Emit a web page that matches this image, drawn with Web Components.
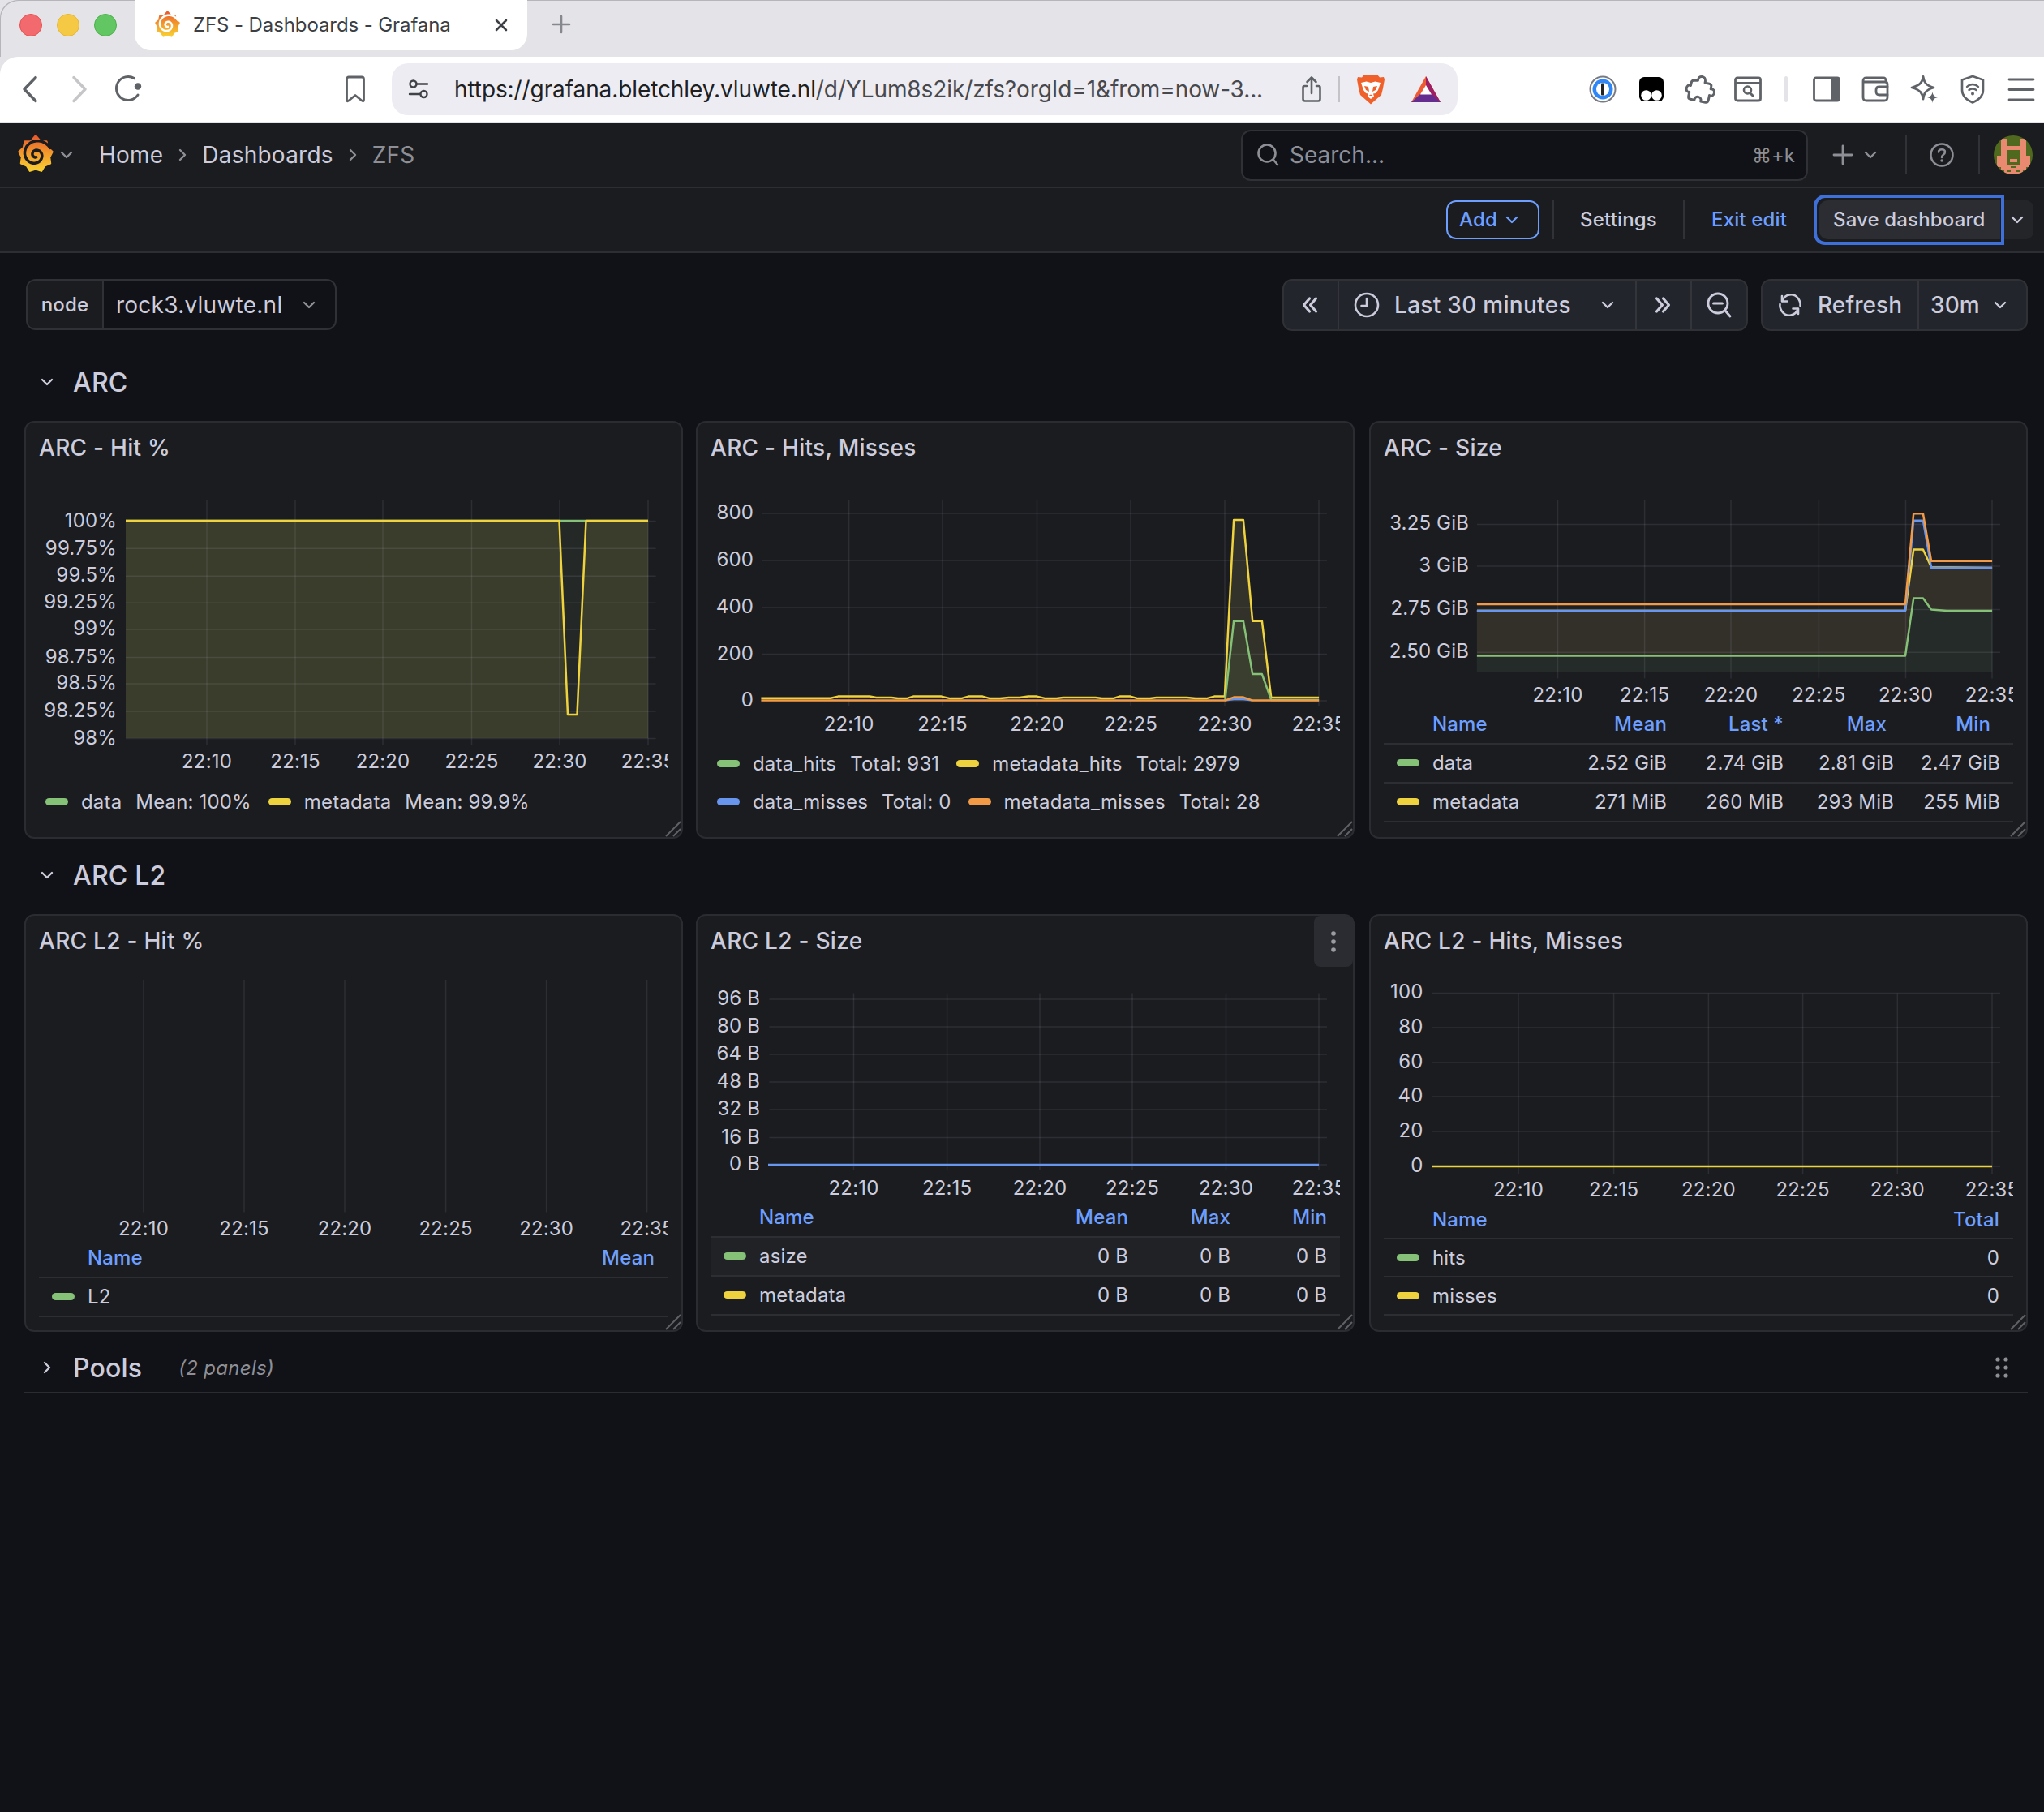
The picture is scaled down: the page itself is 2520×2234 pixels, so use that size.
<!DOCTYPE html>
<html lang="en"><head><meta charset="utf-8"><title>ZFS - Dashboards - Grafana</title>
<style>
html,body{margin:0;padding:0;background:#111217;}
body{width:2520px;height:2234px;overflow:hidden;font-family:Inter,"Noto Sans","DejaVu Sans",sans-serif;color:#ccccdc;}
</style></head>
<body>
<browser-chrome></browser-chrome>
<gf-topnav></gf-topnav>
<gf-toolbar></gf-toolbar>
<gf-main>
  <gf-controls></gf-controls>
  <gf-rowhead label="ARC"></gf-rowhead>
  <gf-grid>
    <gf-panel label="ARC - Hit %">
      <ts-chart cfg="hit"></ts-chart>
      <lg-list>
        <lg-item color="#85c176" name="data" value="Mean: 100%"></lg-item>
        <lg-item color="#eed33f" name="metadata" value="Mean: 99.9%"></lg-item>
      </lg-list>
    </gf-panel>
    <gf-panel label="ARC - Hits, Misses">
      <ts-chart cfg="hits"></ts-chart>
      <lg-list wrap>
        <lg-item color="#85c176" name="data_hits" value="Total: 931"></lg-item>
        <lg-item color="#eed33f" name="metadata_hits" value="Total: 2979"></lg-item>
        <lg-item color="#6895ed" name="data_misses" value="Total: 0"></lg-item>
        <lg-item color="#f29a45" name="metadata_misses" value="Total: 28"></lg-item>
      </lg-list>
    </gf-panel>
    <gf-panel label="ARC - Size">
      <ts-chart cfg="size"></ts-chart>
      <lg-table style="--cols:136px 153px 144px 136px 131px">
        <lg-row head><span>Name</span><span>Mean</span><span>Last *</span><span style="padding-right:9px">Max</span><span style="padding-right:12px">Min</span></lg-row>
        <lg-row color="#85c176"><span>data</span><span>2.52 GiB</span><span>2.74 GiB</span><span>2.81 GiB</span><span>2.47 GiB</span></lg-row>
        <lg-row color="#eed33f"><span>metadata</span><span>271 MiB</span><span>260 MiB</span><span>293 MiB</span><span>255 MiB</span></lg-row>
      </lg-table>
    </gf-panel>
  </gf-grid>
  <gf-rowhead label="ARC L2" style="margin-top:14px"></gf-rowhead>
  <gf-grid>
    <gf-panel label="ARC L2 - Hit %">
      <ts-chart cfg="l2hit"></ts-chart>
      <lg-table style="--cols:1fr 120px">
        <lg-row head><span>Name</span><span>Mean</span></lg-row>
        <lg-row color="#85c176"><span>L2</span><span></span></lg-row>
      </lg-table>
    </gf-panel>
    <gf-panel label="ARC L2 - Size" menu>
      <ts-chart cfg="l2size"></ts-chart>
      <lg-table style="--cols:1fr 120px 126px 119px;--pr:16px">
        <lg-row head><span>Name</span><span>Mean</span><span>Max</span><span>Min</span></lg-row>
        <lg-row color="#85c176" hover><span>asize</span><span>0 B</span><span>0 B</span><span>0 B</span></lg-row>
        <lg-row color="#eed33f"><span>metadata</span><span>0 B</span><span>0 B</span><span>0 B</span></lg-row>
      </lg-table>
    </gf-panel>
    <gf-panel label="ARC L2 - Hits, Misses">
      <ts-chart cfg="l2hits"></ts-chart>
      <lg-table style="--cols:1fr 120px;--rh:47px">
        <lg-row head style="--rh:48px"><span>Name</span><span>Total</span></lg-row>
        <lg-row color="#85c176"><span>hits</span><span>0</span></lg-row>
        <lg-row color="#eed33f"><span>misses</span><span>0</span></lg-row>
      </lg-table>
    </gf-panel>
  </gf-grid>
  <gf-rowhead label="Pools" style="margin-top:14px" collapsed note="(2 panels)"></gf-rowhead>
</gf-main>

<script>
const S='fill="none" stroke="currentColor" stroke-linecap="round" stroke-linejoin="round"';
const ICONS={
 back:[20,34,`<path d="M17 2.5 3 17l14 14.5" ${S} stroke-width="3.5"/>`],
 forward:[20,34,`<path d="M3 2.5 17 17 3 31.5" ${S} stroke-width="3.5"/>`],
 reload:[36,36,`<path d="M24.5 4.6A14.5 14.5 0 1 0 29 25" ${S} stroke-width="3"/><circle cx="29" cy="14.5" r="4.2" fill="currentColor"/>`],
 bookmark:[26,34,`<path d="M2.5 4.5Q2.5 2 5 2H21Q23.5 2 23.5 4.500V30Q23.500 33 21 31L13 24.500 5 31Q2.500 33 2.500 30Z" ${S} stroke-width="2.800"/>`],
 tune:[26,24,`<circle cx="6.500" cy="5.500" r="4" ${S} stroke-width="2.400"/><path d="M10.500 5.500H24M2 18H15" ${S} stroke-width="2.400"/><circle cx="19.500" cy="18" r="4" ${S} stroke-width="2.400"/>`],
 share:[26,34,`<path d="M7 13H4.500Q2.500 13 2.500 15V29Q2.500 31.500 5 31.500H21Q23.500 31.500 23.500 29V15Q23.500 13 21.500 13H19" ${S} stroke-width="2.600"/><path d="M13 22V2.500M7.500 8 13 2.500 18.500 8" ${S} stroke-width="2.600"/>`],
 brave:[34,38,`<path d="M9 1H25L28 4.500 33 4 34 7 32 18 30 26 22 33 17 37.500 12 33 4 26 2 18 0 7 1 4 6 4.500Z" fill="#f0602a"/><path d="M5 11 11.500 9.500 17 11 22.500 9.500 29 11 26 20 23 24 20 24.500 21 28 17 31 13 28 14 24.500 11 24 8 20Z" fill="#fff"/><path d="M9 15 14 16 15 22 11 20ZM25 15 20 16 19 22 23 20ZM14.500 27H19.500L17 25.500Z" fill="#f0602a"/>`],
 bat:[38,34,`<path d="M19 1 1 33H37Z" fill="#ee5a32"/><path d="M19 1 19 20 37 33Z" fill="#9e1f63"/><path d="M1 33 12 23H26L37 33Z" fill="#662d91"/><path d="M19 12 12 23.500H26Z" fill="#fff"/>`],
 onep:[34,34,`<circle cx="17" cy="17" r="15.500" fill="#fff" stroke="#777a80" stroke-width="2"/><circle cx="17" cy="17" r="12.500" fill="#2f86f6"/><circle cx="17" cy="17" r="8" fill="#fff"/><rect x="15" y="9.500" width="4" height="15" rx="1" fill="#222"/>`],
 tamper:[32,32,`<rect x="1" y="1" width="30" height="30" rx="6" fill="#000"/><circle cx="9.500" cy="23.500" r="6.300" fill="#fff"/><circle cx="22.500" cy="23.500" r="6.300" fill="#fff"/>`],
 puzzle:[36,36,`<path d="M12.500 8C11 1 21 0 21.500 7L21.500 9 27 9C29.500 9 30 10 30 12L30 15C37 13 37 25 30 23L30 29C30 31.500 29 32.500 27 32.500H21C22 26 12 26 13 32.500H8C5.500 32.500 5 31 5 29V24C-1 26-1 14 5 16V12C5 10 6 9 8 9Z" ${S} stroke-width="3" transform="rotate(12 17 17)"/>`],
 reader:[34,32,`<rect x="1.500" y="2" width="31" height="28" rx="2.500" ${S} stroke-width="2.800"/><path d="M2 8.500H32" ${S} stroke-width="2.800"/><circle cx="16.500" cy="17" r="4.500" ${S} stroke-width="2.600"/><path d="M20 21 23.500 24.500" ${S} stroke-width="3"/>`],
 sidebar:[34,32,`<rect x="1.500" y="2" width="31" height="28" rx="2.500" ${S} stroke-width="2.800"/><path d="M22 2H30.500Q33 2 33 4.500V27.500Q33 30 30.500 30H22Z" fill="currentColor"/>`],
 wallet:[34,32,`<path d="M30 7V5Q30 2 27 2H6Q2 2 2 6V26Q2 30 6 30H28Q32 30 32 26V10Q32 7 29 7H3" ${S} stroke-width="2.800"/><path d="M32 13H22Q18 13 18 17V19Q18 23 22 23H32" ${S} stroke-width="2.800"/>`],
 sparkle:[36,36,`<path d="M16 2.500C17 9 19 13 29 16 19 19 17 23 16 30 15 23 13 19 2 16 13 13 15 9 16 2.500Z" ${S} stroke-width="2.800"/><path d="M27.500 21C28 25 29.500 27 34 28 29.500 29 28 31 27.500 35 27 31 25.500 29 21 28 25.500 27 27 25 27.500 21Z" fill="currentColor"/>`],
 shield:[30,36,`<path d="M15 2 28 6.500V19C28 26 23 31 15 34.500 7 31 2 26 2 19V6.500Z" ${S} stroke-width="2.600"/><path d="M8 15C12 11 18 11 22 15M10.500 19C13 17 17 17 19.500 19" ${S} stroke-width="2.400"/><circle cx="15" cy="23.500" r="2" fill="currentColor"/>`],
 menu:[34,30,`<path d="M2 3H32M2 15.500H32M2 28H32" ${S} stroke-width="2.800"/>`],
 chev:[16,10,`<path d="M2 2 8 8 14 2" ${S} stroke-width="2.400"/>`],
 chevr:[10,16,`<path d="M2 2 8 8 2 14" ${S} stroke-width="2.400"/>`],
 search:[28,30,`<circle cx="13" cy="13" r="10.500" ${S} stroke-width="2.600"/><path d="M21 21 26 27" ${S} stroke-width="2.600"/>`],
 plus:[26,26,`<path d="M13 2V24M2 13H24" ${S} stroke-width="2.800"/>`],
 plusS:[22,22,`<path d="M11 1V21M1 11H21" ${S} stroke-width="2.600"/>`],
 help:[30,32,`<circle cx="15" cy="16" r="13.500" ${S} stroke-width="2.500"/><path d="M11 12.500C11 8 19 8 19 12.500 19 15.500 15 15.500 15 19" ${S} stroke-width="2.500"/><circle cx="15" cy="23" r="1.700" fill="currentColor"/>`],
 dblL:[24,24,`<path d="M11.500 4 4.500 12 11.500 20M19.500 4 12.500 12 19.500 20" ${S} stroke-width="3.200"/>`],
 dblR:[24,24,`<path d="M4.500 4 11.500 12 4.500 20M12.500 4 19.500 12 12.500 20" ${S} stroke-width="3.200"/>`],
 clock:[32,32,`<circle cx="16" cy="16" r="14" ${S} stroke-width="2.600"/><path d="M16 8V17H9.500" ${S} stroke-width="2.600"/>`],
 zoomout:[32,32,`<circle cx="14" cy="14" r="12" ${S} stroke-width="2.800"/><path d="M8.500 14H19.500" ${S} stroke-width="3"/><path d="M23 23 29 30" ${S} stroke-width="2.800"/>`],
 refresh:[32,34,`<path d="M6 6V12.500H12.500M26 28V21.500H19.500" ${S} stroke-width="2.600"/><path d="M6.500 12C9 4 20 1 26 9 28 12 29 15 28.500 18M25.500 22C23 30 12 33 6 25 4 22 3 19 3.500 16" ${S} stroke-width="2.600"/>`],
 dots:[6,30,`<circle cx="3" cy="5" r="2.800" fill="currentColor"/><circle cx="3" cy="15" r="2.800" fill="currentColor"/><circle cx="3" cy="25" r="2.800" fill="currentColor"/>`],
 drag:[16,26,`<g fill="currentColor"><circle cx="3" cy="3" r="2.600"/><circle cx="13" cy="3" r="2.600"/><circle cx="3" cy="13" r="2.600"/><circle cx="13" cy="13" r="2.600"/><circle cx="3" cy="23" r="2.600"/><circle cx="13" cy="23" r="2.600"/></g>`],
 avatar:[48,48,`<clipPath id="av"><ellipse cx="24" cy="24" rx="24" ry="24"/></clipPath><g clip-path="url(#av)"><rect width="48" height="48" fill="#4f6a1e"/><g fill="#e98a70"><rect x="9" y="4" width="8" height="21"/><rect x="32" y="4" width="8" height="21"/><rect x="9" y="13" width="31" height="5"/><rect x="4" y="3" width="4" height="3"/><rect x="41" y="3" width="4" height="3"/><rect x="4" y="25" width="13" height="14"/><rect x="32" y="25" width="13" height="14"/><rect x="9" y="39" width="8" height="4"/><rect x="32" y="39" width="8" height="4"/><rect x="20" y="29" width="9" height="4"/><rect x="17" y="36" width="15" height="7"/><rect x="13" y="43" width="23" height="5"/></g><g fill="#4f6a1e"><rect x="21" y="38" width="7" height="2"/><rect x="17" y="43" width="4" height="2"/><rect x="28" y="43" width="4" height="2"/></g></g>`]
};
class UiIcon extends HTMLElement{
  connectedCallback(){
    const [w,h,b]=ICONS[this.getAttribute('name')];
    this.attachShadow({mode:'open'}).innerHTML=`<style>:host{display:inline-flex;flex:none;width:${w}px;height:${h}px}svg{display:block;overflow:visible}</style><svg width="${w}" height="${h}" viewBox="0 0 ${w} ${h}">${b}</svg>`;
  }
}
customElements.define('ui-icon',UiIcon);

class GfLogo extends HTMLElement{
  connectedCallback(){
    const w=+this.getAttribute('size')||44, sw=this.getAttribute('swirl')||'#1a1c20';
    const cx=50,cy=54,pts=[];
    for(let i=0;i<18;i++){
      const a=(-90+i*20)*Math.PI/180;
      const r=i%2==0?(i==0?52:47):39;
      pts.push((cx+r*Math.cos(a)).toFixed(1)+','+(cy+r*Math.sin(a)*1.02).toFixed(1));
    }
    let d='';
    for(let t=0;t<=1.001;t+=0.02){
      const a=(-25-t*1.75*360)*Math.PI/180, r=7+38*Math.pow(1-t,1.7);
      d+=(d?'L':'M')+(cx+r*Math.cos(a)).toFixed(1)+' '+(cy+r*Math.sin(a)).toFixed(1);
    }
    this.attachShadow({mode:'open'}).innerHTML=`<style>:host{display:inline-flex;flex:none}svg{display:block}</style>
    <svg width="${w}" height="${w*1.09}" viewBox="0 0 100 109">
      <defs><linearGradient id="g" x1="0" y1="0" x2="0" y2="1"><stop offset="0" stop-color="#e8592c"/><stop offset=".5" stop-color="#f39a2c"/><stop offset="1" stop-color="#f8cf33"/></linearGradient></defs>
      <polygon points="${pts.join(' ')}" fill="url(#g)" stroke="url(#g)" stroke-width="6" stroke-linejoin="round"/>
      <path d="${d}" fill="none" stroke="${sw}" stroke-width="8" stroke-linecap="round"/>
    </svg>`;
  }
}
customElements.define('gf-logo',GfLogo);

class BrowserChrome extends HTMLElement{
  constructor(){super();this.attachShadow({mode:'open'}).innerHTML=`<style>
  :host{display:block;width:2520px;height:152px;background:#e3e3e8;color:#5f6368}
  .strip{display:flex;height:70px;align-items:flex-start;border-top-left-radius:22px;box-shadow:inset 1px 1px 0 #b5b5ba}
  .lights{display:flex;gap:18px;margin:17px 0 0 24px}
  .lights i{display:block;box-sizing:border-box;width:28px;height:28px;border-radius:50%;border:1px solid}
  .tab{box-sizing:border-box;width:484px;height:62px;margin-left:22px;background:#fff;border-radius:0 0 20px 20px;display:flex;align-items:center;padding-left:25px;font-size:24px;color:#3c3f44}
  .tab span{margin-left:16px;letter-spacing:-.1px;white-space:nowrap;padding-bottom:2px}
  .x{position:relative;margin-left:auto;margin-right:24px;width:16px;height:16px}
  .new{margin:19px 0 0 31px;color:#85888d}
  .bar{display:flex;align-items:center;height:80px;background:#fff;border-top-left-radius:22px}
  .pill{box-sizing:border-box;width:1314px;height:64px;margin-left:32px;background:#edecf2;border-radius:20px;display:flex;align-items:center;padding-left:20px;color:#3f4247}
  .url{margin-left:31px;font-size:28px;color:#47494e;white-space:nowrap;width:996px;letter-spacing:-.1px}
  .url b{font-weight:400;color:#1d1f22}
  .pill ui-icon{flex:none}
  .sep{width:2px;height:32px;background:#c4c4c8;flex:none}
  </style>
  <div class="strip">
    <div class="lights"><i style="background:#f36a6e;border-color:#e6504f"></i><i style="background:#f6c945;border-color:#e9b52d"></i><i style="background:#62c663;border-color:#4cb04c"></i></div>
    <div class="tab"><gf-logo size="31" swirl="#ffffff"></gf-logo><span>ZFS - Dashboards - Grafana</span>
      <svg class="x" viewBox="0 0 16 16"><path d="M2 2 14 14M14 2 2 14" fill="none" stroke="#3c3f44" stroke-width="2.600" stroke-linecap="round"/></svg></div>
    <ui-icon class="new" name="plusS"></ui-icon>
  </div>
  <div class="bar">
    <ui-icon name="back" style="margin-left:27px"></ui-icon>
    <ui-icon name="forward" style="margin-left:41px;color:#c6c6c8"></ui-icon>
    <ui-icon name="reload" style="margin-left:33px"></ui-icon>
    <ui-icon name="bookmark" style="margin-left:248px"></ui-icon>
    <div class="pill"><ui-icon name="tune"></ui-icon><span class="url"><span><b>https://grafana.bletchley.vluwte.nl</b>/d/YLum8s2ik/zfs?orgId=1&amp;from=now-3...</span></span>
      <ui-icon name="share" style="margin-left:48px;color:#5f6368"></ui-icon><i class="sep" style="margin-left:20px"></i>
      <ui-icon name="brave" style="margin-left:21px"></ui-icon><ui-icon name="bat" style="margin-left:32px"></ui-icon></div>
    <ui-icon name="onep" style="margin-left:162px"></ui-icon>
    <ui-icon name="tamper" style="margin-left:27px"></ui-icon>
    <ui-icon name="puzzle" style="margin-left:27px"></ui-icon>
    <ui-icon name="reader" style="margin-left:23px"></ui-icon>
    <i class="sep" style="margin-left:28px;width:4px;background:#e3e3e8;border-radius:2px"></i>
    <ui-icon name="sidebar" style="margin-left:31px"></ui-icon>
    <ui-icon name="wallet" style="margin-left:26px"></ui-icon>
    <ui-icon name="sparkle" style="margin-left:26px"></ui-icon>
    <ui-icon name="shield" style="margin-left:26px"></ui-icon>
    <ui-icon name="menu" style="margin-left:28px"></ui-icon>
  </div>`;}
}
customElements.define('browser-chrome',BrowserChrome);

class GfTopnav extends HTMLElement{
  constructor(){super();this.attachShadow({mode:'open'}).innerHTML=`<style>
  :host{display:flex;align-items:center;box-sizing:border-box;height:80px;width:2520px;padding-right:14px;background:#1a1c20;border-bottom:2px solid #2c2e33;font-size:28px;color:#ccccdc}
  .crumb{letter-spacing:.22px}
  .muted{color:#8e8f96}
  .sep{margin:0 19px 0 19px;color:#8e8f96}
  .bsep{width:2px;height:48px;background:#303238;flex:none}
  .search{box-sizing:border-box;margin-left:auto;width:699px;height:63px;background:#111217;border:2px solid #2f3136;border-radius:12px;display:flex;align-items:center;padding:0 14px 0 17px;color:#8e8f96}
  .search span{margin-left:13px;flex:1}
  .search kbd{font:24px Inter,"DejaVu Sans",sans-serif;color:#8e8f96}
  </style>
  <gf-logo size="44" style="margin-left:22px"></gf-logo>
  <ui-icon name="chev" class="muted" style="margin-left:8px"></ui-icon>
  <span class="crumb" style="margin-left:32px">Home</span><ui-icon name="chevr" class="sep"></ui-icon>
  <span class="crumb">Dashboards</span><ui-icon name="chevr" class="sep"></ui-icon>
  <span class="crumb muted">ZFS</span>
  <div class="search"><ui-icon name="search"></ui-icon><span>Search...</span><kbd>⌘+k</kbd></div>
  <ui-icon name="plus" class="muted" style="margin-left:30px"></ui-icon>
  <ui-icon name="chev" class="muted" style="margin-left:13px"></ui-icon>
  <i class="bsep" style="margin-left:35px"></i>
  <ui-icon name="help" class="muted" style="margin-left:28px"></ui-icon>
  <i class="bsep" style="margin-left:30px"></i>
  <ui-icon name="avatar" style="margin-left:17px"></ui-icon>`;}
}
customElements.define('gf-topnav',GfTopnav);

class GfToolbar extends HTMLElement{
  constructor(){super();this.attachShadow({mode:'open'}).innerHTML=`<style>
  :host{display:flex;align-items:center;justify-content:flex-end;box-sizing:border-box;height:80px;width:2520px;padding-right:13px;background:#1a1c20;border-bottom:2px solid #2c2e33;font-size:24px;font-weight:500;color:#ccccdc;letter-spacing:.15px}
  .add{box-sizing:border-box;width:115px;height:48px;border:2px solid #6e9fff;border-radius:12px;color:#6e9fff;display:flex;align-items:center;gap:10px;padding-left:14px}
  .add span,.item span,.t span{padding-bottom:2px;display:block}
  .bsep{width:2px;height:48px;background:#303238;flex:none}
  .item{display:flex;align-items:center;justify-content:center;height:48px;flex:none}
  .save{position:relative;display:flex;align-items:center;height:48px;width:264px;background:#2b2d32;border-radius:10px;margin-left:7px}
  .save .t{box-sizing:border-box;width:223px;padding-left:17px;white-space:nowrap;flex:none}
  .save .c{display:flex;align-items:center;justify-content:center;flex:1;height:100%;background:#232529;border-left:2px solid #1a1c20;border-radius:0 10px 10px 0;padding-right:2px}
  .ring{position:absolute;left:-7px;top:-7px;width:235px;height:62px;box-sizing:border-box;border:4px solid #3f6fd8;border-radius:14px 0 0 14px;pointer-events:none}
  </style>
  <div class="add"><span>Add</span><ui-icon name="chev"></ui-icon></div>
  <i class="bsep" style="margin-left:16px"></i>
  <div class="item" style="width:159px"><span>Settings</span></div>
  <i class="bsep"></i>
  <div class="item" style="width:159px;color:#6e9fff"><span>Exit edit</span></div>
  <div class="save"><span class="t"><span>Save dashboard</span></span><span class="c"><ui-icon name="chev"></ui-icon></span><i class="ring"></i></div>`;}
}
customElements.define('gf-toolbar',GfToolbar);

class GfMain extends HTMLElement{
  constructor(){super();this.attachShadow({mode:'open'}).innerHTML=`<style>:host{display:flex;flex-direction:column;box-sizing:border-box;width:2520px;padding:32px 20px 0 30px}</style><slot></slot>`;}
}
customElements.define('gf-main',GfMain);

class GfControls extends HTMLElement{
  constructor(){super();this.attachShadow({mode:'open'}).innerHTML=`<style>
  :host{display:flex;justify-content:space-between;height:64px;font-size:28px}
  .var{display:flex;margin-left:2px;height:63px;box-sizing:border-box;border:2px solid #2f3136;border-radius:12px;overflow:hidden;width:383px}
  .var b{font-weight:500;font-size:24px;background:#1a1c20;width:92px;display:flex;align-items:center;justify-content:center;border-right:2px solid #2f3136;flex:none;letter-spacing:.2px}
  .var span{display:flex;align-items:center;padding-left:15px;flex:1;white-space:nowrap;font-weight:400;letter-spacing:.25px}
  .var ui-icon{align-self:center;margin-right:24px;color:#8e8f96}
  .right{display:flex;gap:16px}
  .grp{display:flex;height:64px;box-sizing:border-box;border:2px solid #2f3136;border-radius:12px;background:#22252b;font-weight:500;overflow:hidden}
  .seg{display:flex;align-items:center;justify-content:center;box-sizing:border-box;flex:none}
  .seg+.seg{border-left:2px solid #33353b}
  .t{letter-spacing:.3px;white-space:nowrap}
  </style>
  <div class="var"><b>node</b><span>rock3.vluwte.nl</span><ui-icon name="chev"></ui-icon></div>
  <div class="right">
    <div class="grp">
      <div class="seg" style="width:66px;padding-right:2px"><ui-icon name="dblL"></ui-icon></div>
      <div class="seg" style="width:367px;justify-content:flex-start;padding-left:18px"><ui-icon name="clock"></ui-icon><span class="t" style="margin-left:18px">Last 30 minutes</span><ui-icon name="chev" style="margin-left:37px"></ui-icon></div>
      <div class="seg" style="width:68px;padding-right:2px"><ui-icon name="dblR"></ui-icon></div>
      <div class="seg" style="width:69px"><ui-icon name="zoomout"></ui-icon></div>
    </div>
    <div class="grp">
      <div class="seg" style="width:191px;justify-content:flex-start;padding-left:18px"><ui-icon name="refresh"></ui-icon><span class="t" style="margin-left:18px;letter-spacing:.1px">Refresh</span></div>
      <div class="seg" style="width:134px;justify-content:flex-start;padding-left:14px"><span class="t" style="letter-spacing:.1px">30m</span><ui-icon name="chev" style="margin-left:17px"></ui-icon></div>
    </div>
  </div>`;}
}
customElements.define('gf-controls',GfControls);

class GfRowhead extends HTMLElement{
  connectedCallback(){
    const c=this.hasAttribute('collapsed'),note=this.getAttribute('note');
    this.attachShadow({mode:'open'}).innerHTML=`<style>
    :host{display:flex;align-items:center;box-sizing:border-box;height:62px;margin-top:32px;font-size:32px;font-weight:500;color:#ccccdc;letter-spacing:.2px;${c?'border-bottom:2px solid #2a2c30;':''}}
    .ch{width:60px;display:flex;justify-content:center;flex:none;padding-right:5px;box-sizing:border-box}
    em{font-size:24px;font-weight:400;color:#8e8f96;margin-left:45px;letter-spacing:.3px}
    ui-icon.d{margin-left:auto;margin-right:24px;color:#8e8f96}
    </style><span class="ch"><ui-icon name="${c?'chevr':'chev'}"></ui-icon></span><span>${this.getAttribute('label')}</span>${note?`<em>${note}</em><ui-icon class="d" name="drag"></ui-icon>`:''}`;
  }
}
customElements.define('gf-rowhead',GfRowhead);

class GfGrid extends HTMLElement{
  constructor(){super();this.attachShadow({mode:'open'}).innerHTML=`<style>:host{display:grid;grid-template-columns:828px 830px 812px;margin-top:17px}::slotted(*){width:812px}</style><slot></slot>`;}
}
customElements.define('gf-grid',GfGrid);

class GfPanel extends HTMLElement{
  connectedCallback(){
    this.attachShadow({mode:'open'}).innerHTML=`<style>
    :host{display:flex;flex-direction:column;position:relative;box-sizing:border-box;height:515px;background:#1a1c20;border:2px solid #2a2c31;border-radius:12px}
    header{box-sizing:border-box;height:63px;flex:none;display:flex;align-items:center;padding:0 0 2px 16px;font-size:28px;font-weight:500;color:#ccccdc;white-space:nowrap;letter-spacing:.28px}
    .body{padding:0 16px;min-height:0}
    .rz{position:absolute;right:0;bottom:0}
    .menu{position:absolute;right:0;top:0;width:48px;height:63px;background:#2a2c31;border-radius:8px;display:flex;align-items:center;justify-content:center;color:#9b9ca3}
    </style><header>${this.getAttribute('label')}</header><div class="body"><slot></slot></div>
    ${this.hasAttribute('menu')?'<div class="menu"><ui-icon name="dots"></ui-icon></div>':''}
    <svg class="rz" width="20" height="20" viewBox="0 0 20 20"><path d="M1 19 19 1M10 19 19 10" fill="none" stroke="#5f6166" stroke-width="2"/></svg>`;
  }
}
customElements.define('gf-panel',GfPanel);

class LgList extends HTMLElement{
  constructor(){super();this.attachShadow({mode:'open'}).innerHTML=`<style>:host{display:flex;flex-wrap:wrap;column-gap:21px;padding-left:8px;font-size:24px;letter-spacing:.17px}</style><slot></slot>`;}
}
customElements.define('lg-list',LgList);
class LgItem extends HTMLElement{
  connectedCallback(){
    this.attachShadow({mode:'open'}).innerHTML=`<style>
    :host{display:flex;align-items:center;height:47px;white-space:nowrap}
    i{width:28px;height:9px;border-radius:5px;margin-right:16px;flex:none}
    b{font-weight:400;margin-left:17px}
    </style><i style="background:${this.getAttribute('color')}"></i><span>${this.getAttribute('name')}</span><b>${this.getAttribute('value')}</b>`;
  }
}
customElements.define('lg-item',LgItem);
class LgTable extends HTMLElement{
  constructor(){super();this.attachShadow({mode:'open'}).innerHTML=`<style>:host{display:block;font-size:24px;letter-spacing:.15px}</style><slot></slot>`;}
}
customElements.define('lg-table',LgTable);
class LgRow extends HTMLElement{
  connectedCallback(){
    const c=this.getAttribute('color'),h=this.hasAttribute('head');
    this.attachShadow({mode:'open'}).innerHTML=`<style>
    :host{display:grid;position:relative;align-items:center;grid-template-columns:var(--cols);box-sizing:border-box;height:var(--rh,48px);padding:0 var(--pr,17px) 0 60px;border-bottom:2px solid #2c2e33;white-space:nowrap;${h?'color:#6e9fff;font-weight:500;':''}${this.hasAttribute('hover')?'background:#202226;':''}}
    ::slotted(*){text-align:right}
    ::slotted(:first-child){text-align:left}
    i{position:absolute;left:16px;top:50%;margin-top:-5px;width:28px;height:9px;border-radius:5px}
    </style>${c?`<i style="background:${c}"></i>`:''}<slot></slot>`;
  }
}
customElements.define('lg-row',LgRow);

/* chart data: coordinates are given as read off the reference, then mapped to page px */
const Zm=(ox,fx,oy,fy)=>a=>a.map(([x,y])=>[ox+x/fx,oy+y/fy]);
const T=['22:10','22:15','22:20','22:25','22:30','22:35'];
const poly=a=>a.map(p=>p[0].toFixed(1)+','+p[1].toFixed(1)).join(' ');
const z2=Zm(850,1.867,500,2.8), z3=Zm(1680,1.867,500,2.8);
const yBase=[[165,1010],[325,1010],[342,1004],[415,1004],[430,1008],[465,1008],[480,1011],[500,1011],[515,1004],[580,1004],[600,1011],[625,1011],[642,1004],[675,1004],[692,1011],[715,1011],[735,1008],[760,1008],[780,1004],[800,1004],[820,1011],[845,1011],[860,1008],[935,1008],[950,1011],[975,1011],[990,1004],[1015,1004],[1032,1011],[1060,1011],[1075,1008],[1145,1008],[1165,1011],[1190,1011],[1208,1004],[1232,1004],[1253,395],[1275,395],[1296,744],[1318,744],[1339,1008],[1449,1008]];
const CFG={
 hit:{x0:48,y0:584,w:776,h:381,vx:[255,364,472,581.5,690,799],vt:617,vb:919,hx:[155,808.6],hy:[642.4,676.3,710.2,743.2,776,810.5,843,877,910.4],
  yl:['100%','99.75%','99.5%','99.25%','99%','98.75%','98.5%','98.25%','98%'],ylx:144,yoff:-1.5,xly:938.5,
  fills:[[[[155,642],[799,642],[799,910],[155,910]],'#242927'],[[[155,642],[689.5,642],[700,881],[711.5,881],[722.5,642],[799,642],[799,910],[155,910]],'#3a3d2b']],
  lines:[[[[155,642],[799,642]],'#85c176'],[[[155,642],[689.5,642],[700,881],[711.5,881],[722.5,642],[799,642]],'#eed33f']]},
 hits:{x0:876,y0:584,w:776,h:333.5,vx:[1046.6,1162,1278.5,1394,1510,1626],vt:616,vb:871,hx:[940,1636],hy:[633,691,749,806.5,864],
  yl:['800','600','400','200','0'],ylx:929,yoff:-1.5,xly:892.5,
  fills:[[z2(yBase.slice(35).concat([[1449,1018],[1232,1018]])),'#33322a'],[z2([[1233,1018],[1253,744],[1275,744],[1296,927],[1318,927],[1339,1016],[1339,1018]]),'#3a3e2e']],
  lines:[[z2(yBase),'#eed33f'],[z2([[1233,1018],[1253,744],[1275,744],[1296,927],[1318,927],[1339,1016],[1449,1016]]),'#85c176'],[z2([[1233,1018],[1253,1014],[1275,1014],[1296,1018]]),'#6895ed'],[z2([[165,1018],[1233,1018],[1253,1007],[1275,1007],[1296,1018],[1449,1018]]),'#f29a45']]},
 size:{x0:1706,y0:584,w:776,h:285.5,vx:[1920.5,2027.6,2134,2242.4,2349.5,2456],vt:616,vb:836.4,hx:[1821,2466],hy:[646.4,698,751.4,804.3],
  yl:['3.25 GiB','3 GiB','2.75 GiB','2.50 GiB'],ylx:1811,yoff:-2,xly:856,
  fills:[[z3([[263,686],[1249,686],[1268,373],[1290,373],[1309,537],[1449,537],[1449,920],[263,920]]),'#1e2024'],
         [z3([[263,708],[1249,708],[1268,397],[1290,397],[1309,560],[1449,560],[1449,920],[263,920]]),'#232a3a'],
         [z3([[263,708],[1249,708],[1268,497],[1290,497],[1309,558],[1449,560],[1449,920],[263,920]]),'#33302a'],
         [z3([[263,864],[1249,864],[1268,665],[1290,665],[1309,704],[1345,708],[1449,708],[1449,920],[263,920]]),'#252b28']],
  lines:[[z3([[263,864],[1249,864],[1268,665],[1290,665],[1309,704],[1345,708],[1449,708]]),'#85c176'],
         [z3([[263,708],[1249,708],[1268,497],[1290,497],[1309,558],[1449,560]]),'#eed33f'],
         [z3([[263,708],[1249,708],[1268,397],[1290,397],[1309,560],[1449,560]]),'#6895ed'],
         [z3([[263,686],[1249,686],[1268,373],[1290,373],[1309,537],[1449,537]]),'#f29a45']]},
 l2hit:{x0:48,y0:1192,w:776,h:335.5,vx:[177,301,425,549.6,673.6,797.6],vt:1208,vb:1494.5,hx:[0,0],hy:[],yl:[],ylx:0,yoff:0,xly:1514,fills:[],lines:[]},
 l2size:{x0:876,y0:1192,w:776,h:285.5,vx:[1052.5,1167.6,1282,1396,1511.5,1626],vt:1224.5,vb:1443,hx:[948.5,1636],hy:[1232,1266,1300,1334,1368,1402.4,1436],
  yl:['96 B','80 B','64 B','48 B','32 B','16 B','0 B'],ylx:937,yoff:-1.5,xly:1464,fills:[],lines:[[[[947,1436],[1626,1436]],'#6895ed']]},
 l2hits:{x0:1706,y0:1192,w:776,h:288,vx:[1872,1989.6,2106.4,2222.6,2339.3,2456],vt:1224.5,vb:1447,hx:[1765.7,2466],hy:[1224.5,1267,1310,1352,1395,1438],
  yl:['100','80','60','40','20','0'],ylx:1754.5,yoff:-2,xly:1466,fills:[],lines:[[[[1765,1438],[2456,1438]],'#eed33f']]}
};
class TsChart extends HTMLElement{
  connectedCallback(){
    const c=CFG[this.getAttribute('cfg')];
    const grid='#ccccdc', ga='.11';
    let s='';
    for(const [p,col] of c.fills) s+=`<polygon points="${poly(p)}" fill="${col}"/>`;
    for(const x of c.vx) s+=`<line x1="${x}" x2="${x}" y1="${c.vt}" y2="${c.vb}" stroke="${grid}" stroke-opacity="${ga}" stroke-width="1.500"/>`;
    for(const y of c.hy) s+=`<line x1="${c.hx[0]}" x2="${c.hx[1]}" y1="${y}" y2="${y}" stroke="${grid}" stroke-opacity="${ga}" stroke-width="1.500"/>`;
    for(const [p,col] of c.lines) s+=`<polyline points="${poly(p)}" fill="none" stroke="${col}" stroke-width="2.500" stroke-linejoin="round"/>`;
    c.yl.forEach((t,i)=>{s+=`<text x="${c.ylx}" y="${c.hy[i]+c.yoff+8.7}" text-anchor="end">${t}</text>`;});
    c.vx.forEach((x,i)=>{s+=`<text x="${x}" y="${c.xly+8.7}" text-anchor="middle">${T[i]}</text>`;});
    this.attachShadow({mode:'open'}).innerHTML=`<style>:host{display:block;height:${c.h}px;width:${c.w}px;overflow:hidden}svg{display:block}text{font:24px Inter,"Noto Sans",sans-serif;fill:#ccccdc;letter-spacing:.15px}</style>
    <svg width="${c.w}" height="${c.h}" viewBox="${c.x0} ${c.y0} ${c.w} ${c.h}">${s}</svg>`;
  }
}
customElements.define('ts-chart',TsChart);
</script>
</body></html>
